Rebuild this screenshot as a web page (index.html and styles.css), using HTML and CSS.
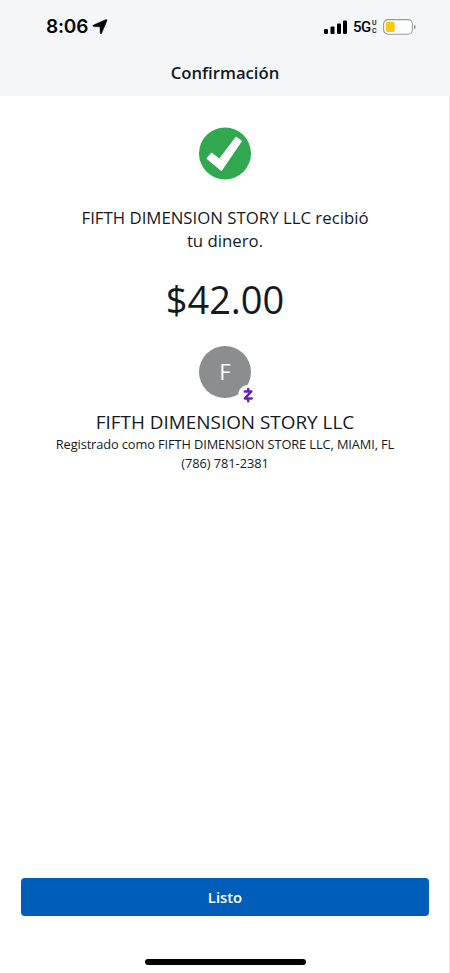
FILE: index.html
```html
<!DOCTYPE html>
<html lang="es">
<head>
<meta charset="utf-8">
<title>Confirmación</title>
<link rel="stylesheet" href="styles.css">
</head>
<body>
<div class="screen">
  <header class="header">
    <div class="status">
      <span class="time">8:06</span>
      <svg class="location" width="16" height="16" viewBox="0 0 16 16"><path d="M13.6 .7Q15.4 .1 14.8 1.9L9.7 14.1Q8.9 15.8 8.2 14.2L8 8.5Q7.9 7.9 7.3 7.8L1.6 7.6Q-.1 6.9 1.5 6.1Z" stroke="#050607" stroke-width=".5"/></svg>
      <svg class="signal" width="24" height="15" viewBox="0 0 24 15"><rect x="0" y="9" width="4" height="5" rx="1"/><rect x="6.5" y="6.5" width="4" height="7.5" rx="1"/><rect x="13" y="3.5" width="4" height="10.5" rx="1"/><rect x="19" y=".5" width="4" height="13.5" rx="1"/></svg>
      <span class="network">5G</span>
      <span class="band"><span>U</span><span>C</span></span>
      <svg class="battery" width="34" height="16" viewBox="0 0 34 16"><rect x=".6" y=".6" width="28.8" height="14.6" rx="4.5" fill="#fdfdfb" stroke="#999b9d" stroke-width="1.1"/><rect x="2.7" y="2.7" width="9" height="10.4" rx="2" fill="#f8ca09"/><path d="M31 5.5q1.7.7 1.7 2.4T31 10.3z" fill="#929496"/></svg>
    </div>
    <h1 class="title">Confirmación</h1>
  </header>
  <main class="content">
    <svg class="check" width="54" height="54" viewBox="0 0 54 54"><circle cx="27" cy="27.4" r="26" fill="#2fa84f"/><path d="M9 31.8l3.9-4.7q.6-.7 1.4-.1l7 5.4L37.2 11.4q.6-.9 1.5-.3l4.7 3.3q.8.6.2 1.4L24.2 44.3q-.6 1-1.6.3L9.1 33.2q-.8-.6-.1-1.4z" fill="#fff"/></svg>
    <p class="message">FIFTH DIMENSION STORY LLC recibió<br>tu dinero.</p>
    <p class="amount">$42.00</p>
    <div class="avatar">
      <span class="initial">F</span>
      <svg class="zelle" width="20" height="20" viewBox="0 0 20 20"><circle cx="10" cy="10" r="10" fill="#fff"/><path d="M6.8 6.5h6.5L6.9 13.4h6.7M10.2 4v2.3M10.2 13.8v2.4" fill="none" stroke="#5f20bd" stroke-width="2.5" stroke-linecap="round" stroke-linejoin="round"/></svg>
    </div>
    <h2 class="name">FIFTH DIMENSION STORY LLC</h2>
    <p class="detail registered">Registrado como FIFTH DIMENSION STORE LLC, MIAMI, FL</p>
    <p class="detail phone">(786) 781-2381</p>
  </main>
  <footer class="footer">
    <button class="done">Listo</button>
    <div class="home"></div>
  </footer>
</div>
</body>
</html>
```

FILE: styles.css
```css
* { box-sizing: border-box; }
body { margin: 0; background: #fff; color: #14191f; font-family: "Open Sans", sans-serif; }
h1, h2, p { margin: 0; font-weight: 400; white-space: nowrap; }
svg { display: block; flex: none; }
.screen { display: flex; flex-direction: column; height: 973px; overflow: hidden; background: linear-gradient(#e5e6e8, #e5e6e8) right / 1px 100% no-repeat; }
.header { flex: none; height: 96px; background: #f4f6f8; }
.status { display: flex; align-items: center; height: 54px; padding-left: 46px; color: #050607; font-family: Inter, sans-serif; }
.time { width: 42px; font-size: 19px; font-weight: 600; line-height: 24px; letter-spacing: -.2px; }
.location { margin-left: 4px; }
.signal { margin-left: 216px; }
.network { width: 18px; margin-left: 5px; font: 500 15px/20px Roboto, sans-serif; letter-spacing: -.6px; }
.band { display: flex; flex-direction: column; width: 7px; margin-left: 1px; font: 500 7px/8px Roboto, sans-serif; }
.battery { margin-left: 4px; }
.title { margin-top: 8px; font-size: 16.7px; font-weight: 600; line-height: 22px; text-align: center; }
.content { display: flex; flex: 1; flex-direction: column; align-items: center; padding-top: 30px; }
.message { margin-top: 26px; font-size: 16.8px; line-height: 23px; text-align: center; }
.amount { margin-top: 22px; font-size: 38px; line-height: 50px; }
.avatar { position: relative; display: flex; align-items: center; justify-content: center; width: 52px; height: 52px; margin-top: 22px; border-radius: 50%; background: #8c8d8e; color: #fff; font-size: 22px; line-height: 30px; }
.initial { padding-bottom: 2px; }
.zelle { position: absolute; top: 39px; left: 39px; }
.name { margin-top: 11px; font-size: 18.9px; line-height: 26px; }
.detail { font-size: 12.8px; line-height: 19px; }
.registered { letter-spacing: -.1px; }
.phone { letter-spacing: -.05px; }
.footer { display: flex; flex: none; flex-direction: column; align-items: center; height: 95px; padding: 0 21px; }
.done { width: 408px; height: 38px; padding: 0; border: 0; border-radius: 4px; background: #005eb8; color: #fff; font: 600 14.8px/38px "Open Sans", sans-serif; }
.home { width: 161px; height: 6px; margin-top: 43px; border-radius: 3px; background: #000; }
```
